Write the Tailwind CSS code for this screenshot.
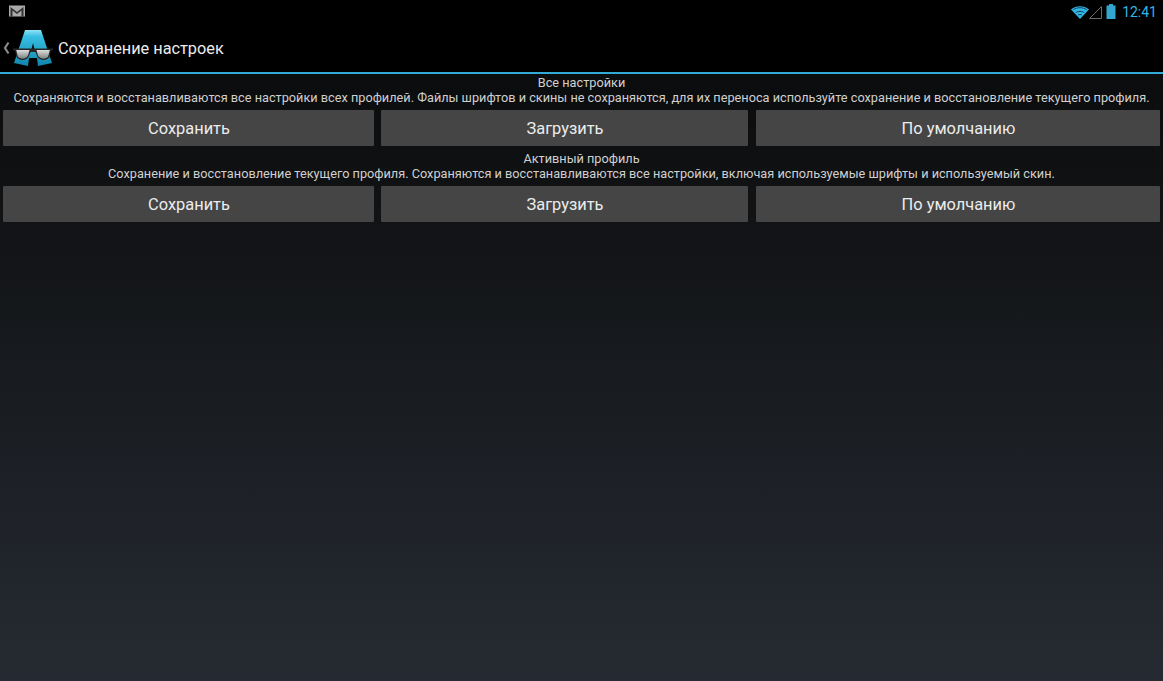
<!DOCTYPE html>
<html>
<head>
<meta charset="utf-8">
<script src="https://cdn.jsdelivr.net/npm/@tailwindcss/browser@4"></script>
</head>
<body class="bg-black">
<div class="w-[1163px] h-[681px] overflow-hidden flex flex-col font-['Roboto',sans-serif] text-[#e4e4e4] bg-black">
  <div class="h-6 shrink-0 bg-black flex items-center justify-between pl-2 pr-[6px]">
    <svg width="16" height="12" viewBox="0 0 16 12" class="mb-[3px] ml-[1px]"><rect width="16" height="11" y="0.500" fill="#a9a9a9"/><path d="M1.500 11.500V2L8 7l6.500-5v9.500h-2V5.500L8 9 3.500 5.500V11.500z" fill="#333"/></svg>
    <div class="flex items-center">
      <svg width="18" height="14" viewBox="0 0 18 14" class="mb-[1px]"><path d="M9 14L0 4.500C4.800 0 13.200 0 18 4.500z" fill="#33b5e5"/><path d="M2.300 4.800C6 2 12 2 15.700 4.800M4.800 7.500C7 6 11 6 13.200 7.500M7 10C8 9.300 10 9.300 11 10" fill="none" stroke="#07384c" stroke-width="0.900"/></svg>
      <svg width="14" height="14" viewBox="0 0 14 14" class="mt-[1px]"><path d="M12.500 0.500V12.500H0.500z" fill="none" stroke="#6a6a6a" stroke-width="1"/></svg>
      <svg width="10" height="15" viewBox="0 0 10 15" class="ml-[3px] mb-[2px]"><path d="M3 0h4v1.500h2.500V15H0.500V1.500h2.500z" fill="#33a5d0"/></svg>
      <span class="ml-[6px] text-[14px] leading-6 text-[#33b5e5]">12:41</span>
    </div>
  </div>
  <div class="h-12 shrink-0 bg-black flex items-center">
    <svg width="8" height="14" viewBox="0 0 8 14" class="ml-[2px]"><path d="M6.500 1.500L3 7l3.500 5.500" fill="none" stroke="#8a8a8a" stroke-width="2.200"/></svg>
    <svg width="40" height="36" viewBox="0 0 40 36" class="ml-[3px]">
      <defs>
        <linearGradient id="a" x1="0" y1="0" x2="0" y2="1"><stop offset="0" stop-color="#8fe3f5"/><stop offset="0.180" stop-color="#38bfe3"/><stop offset="1" stop-color="#0f86ad"/></linearGradient>
        <linearGradient id="l" x1="0" y1="0" x2="0" y2="1"><stop offset="0" stop-color="#dcdfdd"/><stop offset="1" stop-color="#7d8280"/></linearGradient>
      </defs>
      <path d="M12 0H28L39 33L25 36L24 28H16L15 36L1 33Z" fill="url(#a)"/>
      <path d="M20 13L21.500 19H18.500Z" fill="#02141c"/>
      <path d="M0 18.500H40V20.500H38L36.500 27C34 31 27 31 24.500 27L22.500 22H17.500L15.500 27C13 31 6 31 3.500 27L2 20.500H0Z" fill="#262626"/>
      <path d="M3.200 20H16.500L15 25.500C13 29.500 7 29.500 4.800 26.500ZM23.500 20H36.800L35.200 26.500C33 29.500 27 29.500 25 25.500Z" fill="url(#l)"/>
    </svg>
    <span class="ml-[5px] mt-[2px] text-[16.300px] leading-6 text-[#ececec]">Сохранение настроек</span>
  </div>
  <div class="h-[2px] shrink-0 bg-[#33a9d6]"></div>
  <div class="flex-1 flex flex-col pt-[1px] bg-gradient-to-b from-[#0b0c0d] to-[#262b33]">
    <section class="h-[76px] flex flex-col">
      <p class="h-[15px] text-center text-[12.720px] leading-[15px] text-[#d0d0d0]">Все настройки</p>
      <p class="h-[16px] text-center text-[12.720px] leading-[15px] text-[#d0d0d0]">Сохраняются и восстанавливаются все настройки всех профилей. Файлы шрифтов и скины не сохраняются, для их переноса используйте сохранение и восстановление текущего профиля.</p>
      <div class="flex px-[3px] pt-[4px]">
        <button class="w-[371px] h-9 pt-[2px] pl-[1px] rounded-[1px] bg-[#454545] text-[16.400px] text-[#ececec]">Сохранить</button>
        <button class="w-[367px] h-9 pt-[2px] pl-[1px] ml-[7px] rounded-[1px] bg-[#454545] text-[16.400px] text-[#ececec]">Загрузить</button>
        <button class="flex-1 h-9 pt-[2px] pl-[1px] ml-[8px] rounded-[1px] bg-[#454545] text-[16.400px] text-[#ececec]">По умолчанию</button>
      </div>
    </section>
    <section class="h-[76px] flex flex-col">
      <p class="h-[15px] text-center text-[12.720px] leading-[15px] text-[#d0d0d0]">Активный профиль</p>
      <p class="h-[16px] text-center text-[12.720px] leading-[15px] text-[#d0d0d0]">Сохранение и восстановление текущего профиля. Сохраняются и восстанавливаются все настройки, включая используемые шрифты и используемый скин.</p>
      <div class="flex px-[3px] pt-[4px]">
        <button class="w-[371px] h-9 pt-[2px] pl-[1px] rounded-[1px] bg-[#454545] text-[16.400px] text-[#ececec]">Сохранить</button>
        <button class="w-[367px] h-9 pt-[2px] pl-[1px] ml-[7px] rounded-[1px] bg-[#454545] text-[16.400px] text-[#ececec]">Загрузить</button>
        <button class="flex-1 h-9 pt-[2px] pl-[1px] ml-[8px] rounded-[1px] bg-[#454545] text-[16.400px] text-[#ececec]">По умолчанию</button>
      </div>
    </section>
  </div>
</div>
</body>
</html>
